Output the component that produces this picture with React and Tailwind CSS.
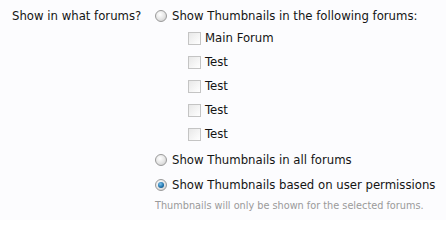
import React from 'react';

function Radio({ checked }) {
  return (
    <span className="relative inline-flex h-[12px] w-[12px] shrink-0 items-center justify-center rounded-full border border-[#9a9a9a] bg-[radial-gradient(circle_at_40%_35%,#ffffff_0%,#e4e4e4_55%,#c4c4c4_100%)]">
      {checked && (
        <span className="h-[6px] w-[6px] rounded-full bg-[radial-gradient(circle_at_40%_35%,#7fc4ee_0%,#1a6ea8_60%,#0d3f66_100%)]" />
      )}
    </span>
  );
}

function Checkbox() {
  return (
    <span className="inline-block h-[13px] w-[13px] shrink-0 border border-[#c4c4c4] bg-gradient-to-br from-[#e8e8e8] to-[#ffffff]" />
  );
}

export default function App() {
  const forums = ['Main Forum', 'Test', 'Test', 'Test', 'Test'];

  return (
    <div className="h-[220px] w-[446px] whitespace-nowrap bg-[#fcfcfe] text-[13px] text-[#141414]" style={{ fontFamily: '"DejaVu Sans Condensed", "DejaVu Sans", sans-serif' }}>
      <div className="flex pt-[8px]">
        <div className="w-[155px] pl-[12px] leading-[16px]">Show in what forums?</div>
        <div className="flex flex-col">
          <label className="flex h-[16px] items-center gap-[5px]">
            <Radio />
            <span>Show Thumbnails in the following forums:</span>
          </label>
          <div className="flex flex-col gap-[8px] pl-[33px] pt-[6px]">
            {forums.map((f, i) => (
              <label key={i} className="flex h-[16px] items-center gap-[4px]">
                <Checkbox />
                <span>{f}</span>
              </label>
            ))}
          </div>
          <label className="mt-[10px] flex h-[16px] items-center gap-[5px]">
            <Radio />
            <span>Show Thumbnails in all forums</span>
          </label>
          <label className="mt-[9px] flex h-[16px] items-center gap-[5px]">
            <Radio checked />
            <span>Show Thumbnails based on user permissions</span>
          </label>
          <p className="mt-[5px] text-[10.8px] text-[#9a9a9a]">Thumbnails will only be shown for the selected forums.</p>
        </div>
      </div>
    </div>
  );
}
